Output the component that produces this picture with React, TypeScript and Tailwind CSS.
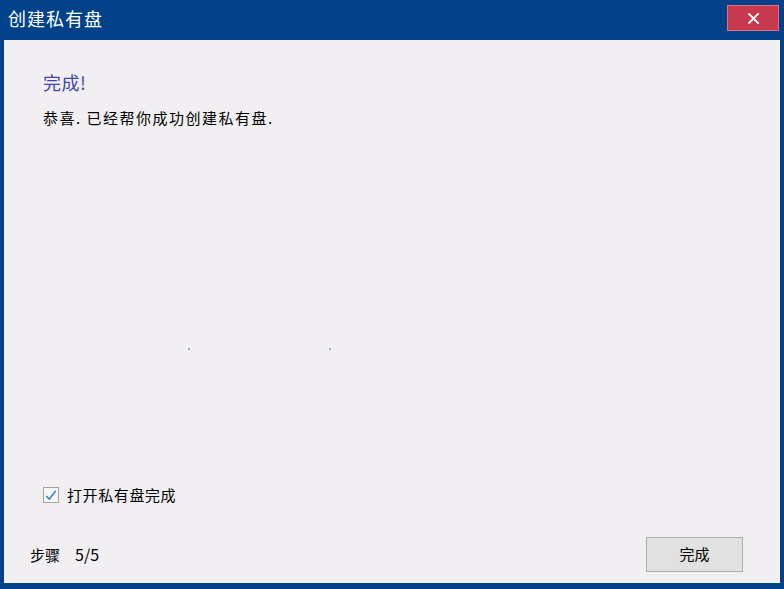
import React from 'react';

const cjk = '"Noto Sans CJK SC", "Noto Sans", sans-serif';

function CheckIcon() {
  return (
    <svg viewBox="0 0 16 16" className="h-[15px] w-[15px]" aria-hidden>
      <path d="M2.5 8.5 L6 12 L13.5 2.5" fill="none" stroke="#3b7fd4" strokeWidth="1.8" />
    </svg>
  );
}

export default function App() {
  return (
    <div className="flex h-[589px] w-[784px] flex-col bg-[#00418a]" style={{ fontFamily: cjk }}>
      {/* title bar */}
      <div className="flex h-[40px] shrink-0 items-start justify-between pl-[8px] pr-[5px]">
        <span className="mt-[6px] text-[18px] leading-[24px] tracking-[1px] text-white">创建私有盘</span>
        <button className="mt-[5px] flex h-[26px] w-[52px] items-center justify-center border border-[#e2717f] bg-[#c8394f]">
          <svg viewBox="0 0 14 14" className="h-[13px] w-[13px]" aria-hidden>
            <path d="M1.5 1.5 L12.5 12.5 M12.5 1.5 L1.5 12.5" stroke="white" strokeWidth="2.2" />
          </svg>
        </button>
      </div>

      {/* body */}
      <div className="relative mx-[4px] mb-[6px] flex flex-1 flex-col border-b border-r border-[#fafafa] bg-[#f1eff1]">
        <div className="pl-[39px] pt-[30px]">
          <h1 className="text-[18px] leading-[24px] tracking-[0.5px] text-[#4446a6]">完成!</h1>
          <p className="mt-[14px] text-[15px] leading-[20px] tracking-[1.5px] text-black">恭喜. 已经帮你成功创建私有盘.</p>
        </div>

        <span className="absolute left-[184px] top-[308px] h-[2px] w-[2px] bg-[#9fb0c8]" />
        <span className="absolute left-[325px] top-[308px] h-[2px] w-[2px] bg-[#9fb0c8]" />

        <div className="flex-1" />

        <label className="flex items-center gap-[8px] pl-[39px]">
          <span className="flex h-[16px] w-[16px] items-center justify-center border border-[#a3a3a3] bg-[#f7f7f7]">
            <CheckIcon />
          </span>
          <span className="text-[15px] leading-[20px] tracking-[0.6px] text-black">打开私有盘完成</span>
        </label>

        <div className="mt-[32px] flex items-center justify-between pb-[10px] pl-[26px] pr-[36px]">
          <span className="text-[15px] leading-[20px] text-black">
            步骤<span className="ml-[15px] text-[16px]">5/5</span>
          </span>
          <button className="h-[35px] w-[97px] border border-[#adadad] bg-[#e1e1e1] text-[15px] text-black">
            完成
          </button>
        </div>
      </div>
    </div>
  );
}
